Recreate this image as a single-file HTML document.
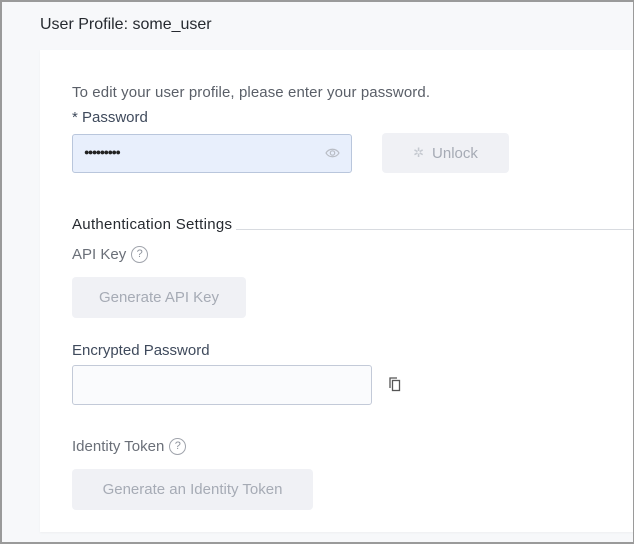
<!DOCTYPE html>
<html><head><style>
*{box-sizing:border-box;margin:0;padding:0}
html,body{width:634px;height:544px;overflow:hidden}
body{background:#f7f8fa;font-family:"Liberation Sans",sans-serif;position:relative}
.frame{position:absolute;left:0;top:0;width:634px;height:544px;border:2px solid #9a9a9a;border-right:1px solid #9a9a9a;pointer-events:none}
.a{position:absolute;white-space:nowrap}
.card{position:absolute;left:40px;top:50px;width:600px;height:482px;background:#fff;box-shadow:0 1px 2px rgba(0,0,0,.04)}
.btn{position:absolute;background:#f0f1f5;border-radius:4px;color:#a6abb5;font-size:15px;display:flex;align-items:center;justify-content:center}
.q{display:inline-block;width:17px;height:17px;border:1px solid #a0a4ac;border-radius:50%;font-size:11px;text-align:center;line-height:15px;color:#8e939c;vertical-align:middle;margin-left:5px;margin-top:-2px}
</style></head><body>
<div class="a" style="left:40px;top:16px;font-size:16px;color:#262a30">User Profile: some_user</div>
<div class="card"></div>
<div class="a" style="left:72px;top:84px;font-size:15px;letter-spacing:0.1px;color:#5a5f68">To edit your user profile, please enter your password.</div>
<div class="a" style="left:72px;top:109px;font-size:15px;color:#3f4a5c">* Password</div>
<div class="a" style="left:72px;top:134px;width:280px;height:39px;background:#e8effc;border:1px solid #b9c6dc;border-radius:3px"></div>
<div class="a" style="left:84px;top:147px;font-size:9px;color:#222;letter-spacing:-1.5px">●●●●●●●●●</div>
<svg class="a" style="left:325px;top:147px" width="15" height="12" viewBox="0 0 15 12"><path d="M1 6C4 1 11 1 14 6C11 11 4 11 1 6Z" fill="none" stroke="#b8bcc4" stroke-width="1.2"/><circle cx="7.5" cy="6" r="2.2" fill="none" stroke="#b8bcc4" stroke-width="1.2"/></svg>
<div class="btn" style="left:382px;top:133px;width:127px;height:40px"><span style="color:#c5c9d0;margin-right:8px;font-size:13px">✲</span>Unlock</div>
<div class="a" style="left:72px;top:216px;font-size:15px;letter-spacing:0.3px;color:#262a30">Authentication Settings</div>
<div class="a" style="left:236px;top:229px;width:400px;height:1px;background:#d8dbe0"></div>
<div class="a" style="left:72px;top:246px;font-size:15px;color:#6a6f78">API Key<span class="q">?</span></div>
<div class="btn" style="left:72px;top:277px;width:174px;height:41px">Generate API Key</div>
<div class="a" style="left:72px;top:342px;font-size:15px;color:#3f4a5c">Encrypted Password</div>
<div class="a" style="left:72px;top:365px;width:300px;height:40px;border:1px solid #c3cad8;border-radius:3px;background:#fafbfd"></div>
<svg class="a" style="left:388px;top:376px" width="14" height="17" viewBox="0 0 14 17"><path d="M2 12V2H9" fill="none" stroke="#555" stroke-width="1.3"/><rect x="4.5" y="4.5" width="7" height="10" fill="none" stroke="#555" stroke-width="1.3"/></svg>
<div class="a" style="left:72px;top:438px;font-size:15px;color:#6a6f78">Identity Token<span class="q">?</span></div>
<div class="btn" style="left:72px;top:469px;width:241px;height:41px">Generate an Identity Token</div>
<div class="frame"></div>
</body></html>
